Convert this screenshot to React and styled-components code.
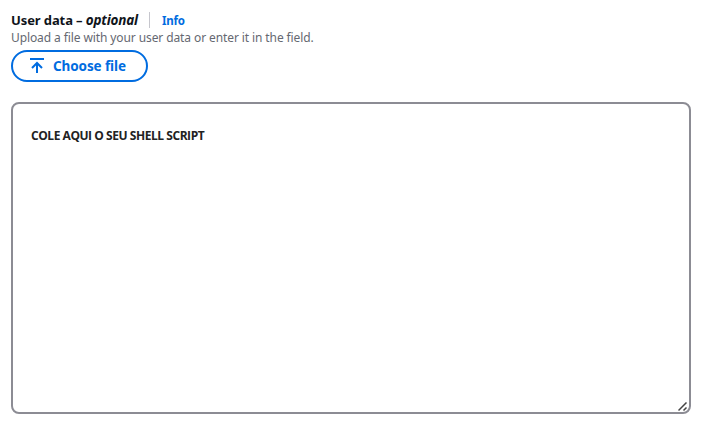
import React from "react";
import styled, { createGlobalStyle } from "styled-components";

const GlobalStyle = createGlobalStyle`
  * { box-sizing: border-box; }
  body { margin: 0; background: #fff; font-family: "Noto Sans", sans-serif; }
`;

const Field = styled.main`
  width: 714px;
  height: 427px;
  padding: 11px 23px 13px 11px;
  display: flex;
  flex-direction: column;
  align-items: flex-start;
`;

const Header = styled.div`
  display: flex;
  align-items: center;
  height: 18px;
  white-space: nowrap;
`;

const Label = styled.label`
  font-size: 13px;
  line-height: 18px;
  font-weight: 700;
  color: #0f141a;
  width: 138px;
  letter-spacing: -0.1px;
`;

const Optional = styled.em`
  font-size: 13.5px;
  letter-spacing: -0.2px;
`;

const InfoLink = styled.a`
  height: 16px;
  padding-left: 12px;
  border-left: 1px solid #c6c6cd;
  font-size: 11.5px;
  line-height: 17px;
  font-weight: 700;
  letter-spacing: -0.2px;
  color: #006ce0;
`;

const Description = styled.div`
  height: 18px;
  font-size: 12px;
  line-height: 18px;
  color: #656871;
  white-space: nowrap;
  letter-spacing: -0.1px;
`;

const FileButton = styled.button`
  display: flex;
  align-items: center;
  gap: 8px;
  width: 137px;
  height: 32px;
  margin-top: 3px;
  padding: 0 0 0 16px;
  border: 2px solid #006ce0;
  border-radius: 16px;
  background: #fff;
  color: #006ce0;
  font: 700 13.5px/20px "Noto Sans", sans-serif;
  letter-spacing: -0.1px;
  white-space: nowrap;
`;

const Editor = styled.div`
  display: flex;
  justify-content: space-between;
  width: 680px;
  height: 312px;
  margin-top: 20px;
  padding: 23px 1px 0 18px;
  border: 2px solid #8c8c94;
  border-radius: 8px;
`;

const Script = styled.div`
  font: 700 12px/18px "Open Sans", sans-serif;
  letter-spacing: -0.45px;
  color: #222;
  white-space: nowrap;
`;

const Grip = styled.svg`
  align-self: flex-end;
`;

export default function App() {
  return (
    <>
      <GlobalStyle />
      <Field>
        <Header>
          <Label>User data – <Optional>optional</Optional></Label>
          <InfoLink>Info</InfoLink>
        </Header>
        <Description>Upload a file with your user data or enter it in the field.</Description>
        <FileButton>
          <svg width="16" height="16" viewBox="0 0 16 16" fill="none" stroke="currentColor" strokeWidth="2">
            <path d="M1 1h14M8 15V6M3 10l5-5 5 5" />
          </svg>
          Choose file
        </FileButton>
        <Editor>
          <Script>COLE AQUI O SEU SHELL SCRIPT</Script>
          <Grip width="10" height="10" viewBox="0 0 10 10" stroke="#444" strokeWidth="1.5">
            <path d="M0.5 8.5L8.5 0.5M5.5 8.5L8.5 5.5" />
          </Grip>
        </Editor>
      </Field>
    </>
  );
}
